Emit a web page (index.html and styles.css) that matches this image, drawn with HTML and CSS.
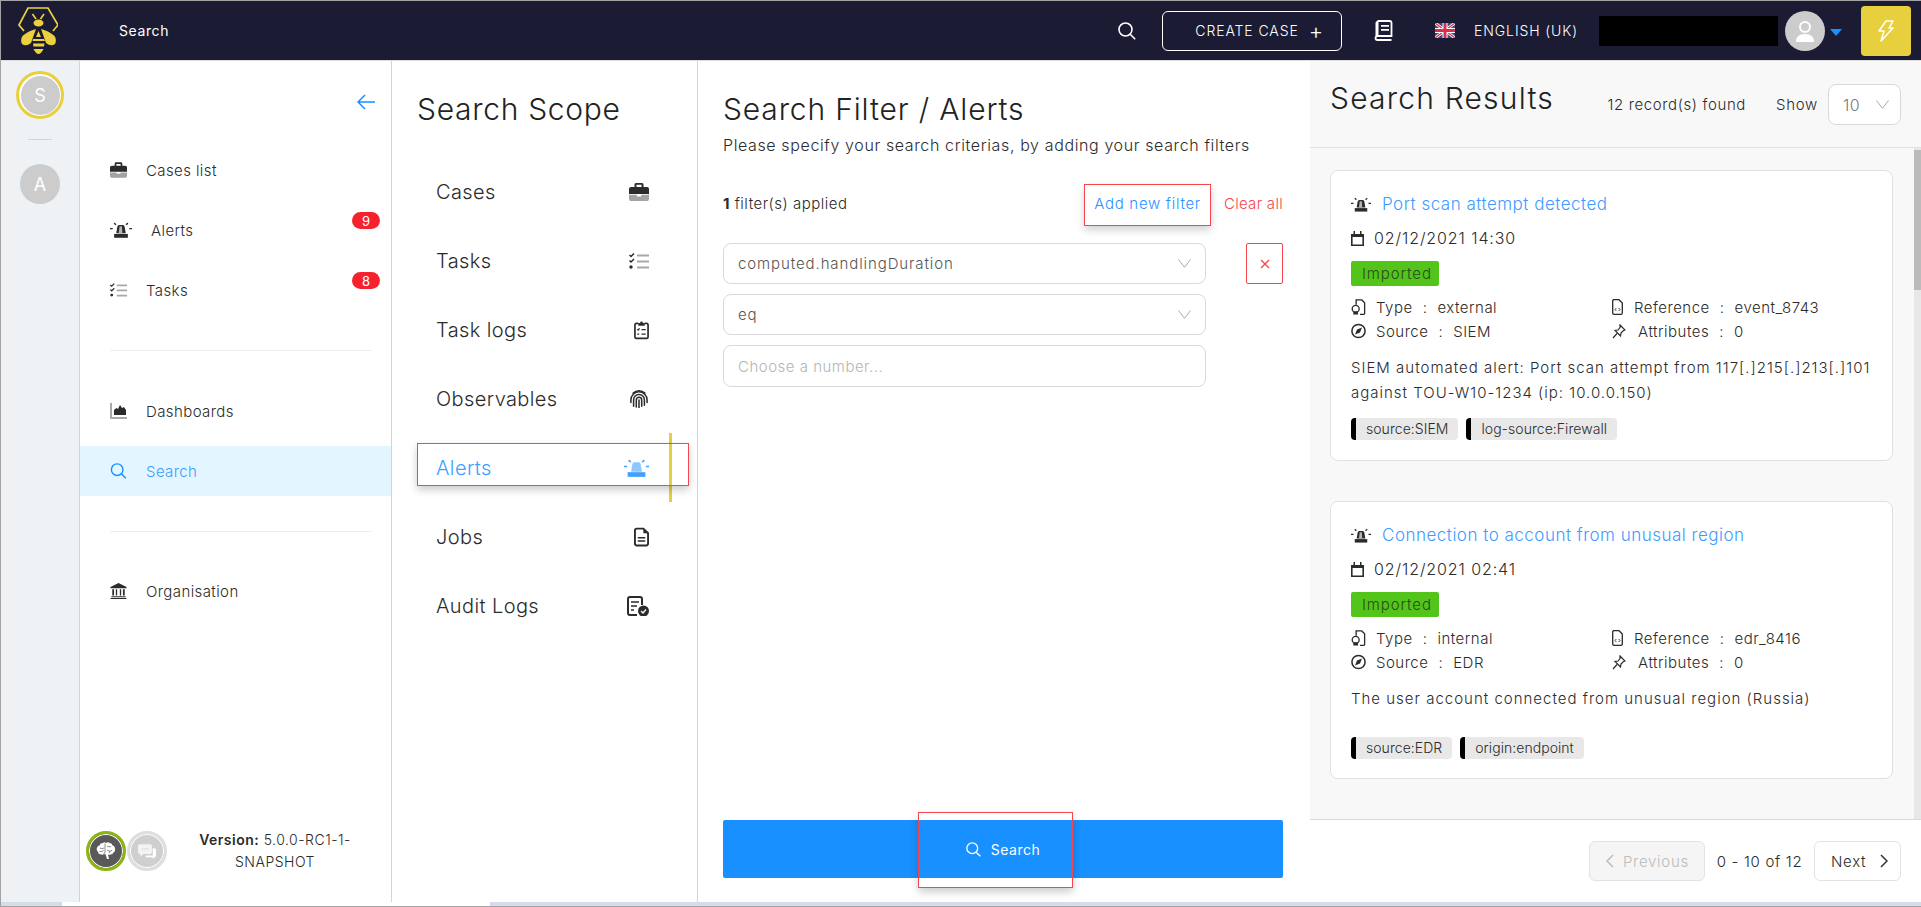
FILE: index.html
```html
<!DOCTYPE html>
<html lang="en">
<head>
<meta charset="utf-8">
<title>Search</title>
<link rel="stylesheet" href="styles.css">
</head>
<body>
<svg class="defs" width="0" height="0" aria-hidden="true">
  <symbol id="i-case" viewBox="0 0 20 18"><path fill="#2b2b2b" d="M7 0h6a1.500 1.500 0 0 1 1.500 1.500V4H18a2 2 0 0 1 2 2v5H0V6a2 2 0 0 1 2-2h3.500V1.500A1.500 1.500 0 0 1 7 0Zm.5 1.800V4h5V1.800h-5Z"/><path fill="#a3a3a3" d="M0 11.800h7.800V13.500h4.400V11.800H20V16a2 2 0 0 1-2 2H2a2 2 0 0 1-2-2Z"/></symbol>
  <symbol id="i-alert" viewBox="0 0 24 17"><path fill="#2b2b2b" d="M8 5q.3-2 2-2h4q1.700 0 2 2l1.200 7H6.800Z"/><path fill="#b5b5b5" d="M10.500 4.500h2.500l.5 7.500H9.500Z"/><path fill="#2b2b2b" d="M4.500 12.800h15V17h-15Z"/><path fill="none" stroke="#2b2b2b" stroke-width="1.500" d="M4.500 1 6.500 2.800M19.500 1l-2 1.800M0 7h3M21 7h3"/></symbol>
  <symbol id="i-alert-blue" viewBox="0 0 24 17"><path fill="#8cc8ff" d="M8 5q.3-2 2-2h4q1.700 0 2 2l1.200 7H6.800Z"/><path fill="#40a0ff" d="M3.500 12.500h17V17h-17Z"/><path fill="none" stroke="#40a0ff" stroke-width="1.500" d="M4.500 1 6.500 2.800M19.500 1l-2 1.800M0 7h3M21 7h3"/></symbol>
  <symbol id="i-tasks" viewBox="0 0 20 16"><path fill="none" stroke="#2b2b2b" stroke-width="1.500" d="M.5 2 2 3.500 5 .5M.5 7.500 2 9l3-3"/><circle cx="2" cy="14" r="1.700" fill="#2b2b2b"/><path fill="none" stroke="#a8a8a8" stroke-width="2" d="M8 2.500h12M8 8.500h12M8 14.500h12"/></symbol>
  <symbol id="i-clip" viewBox="0 0 16 20"><path fill="none" stroke="#2b2b2b" stroke-width="1.800" d="M4.500 3H2.500A1.500 1.500 0 0 0 1 4.500v13A1.500 1.500 0 0 0 2.500 19h11a1.500 1.500 0 0 0 1.500-1.500v-13A1.500 1.500 0 0 0 13.500 3h-2"/><path fill="#2b2b2b" d="M4.500 2.500h2a1.500 1.500 0 0 1 3 0h2V5.500h-7Z"/><path fill="none" stroke="#2b2b2b" stroke-width="1.300" d="M3.500 9 4.500 10 6 8.300M8 9.500h4.500M3.500 14.500h2M8 14.500h4.500"/></symbol>
  <symbol id="i-print" viewBox="0 0 20 20"><g fill="none" stroke="#2b2b2b" stroke-width="1.700" stroke-linecap="round"><path d="M1 11a9 9 0 0 1 18 0M1 14V11M19 14v-3M4 18v-7a6 6 0 0 1 12 0v6M7 19v-8a3 3 0 0 1 6 0v7M10 20v-9"/><path d="M3.500 3.500a9.500 9.500 0 0 1 13 0"/></g></symbol>
  <symbol id="i-doc" viewBox="0 0 16 20"><path fill="none" stroke="#2b2b2b" stroke-width="2" d="M3 1h7l5 5v11a2 2 0 0 1-2 2H3a2 2 0 0 1-2-2V3a2 2 0 0 1 2-2Z"/><path fill="#2b2b2b" d="M10 1l5 5h-5ZM4 10h8v1.500H4ZM4 13.500h8V15H4Z"/></symbol>
  <symbol id="i-audit" viewBox="0 0 22 20"><path fill="none" stroke="#2b2b2b" stroke-width="2" d="M15 9V3a2 2 0 0 0-2-2H3a2 2 0 0 0-2 2v14a2 2 0 0 0 2 2h7"/><path fill="none" stroke="#2b2b2b" stroke-width="1.500" d="M4 6h8M4 10h6M4 14h3"/><circle cx="16.500" cy="15" r="5.500" fill="#2b2b2b"/><path fill="none" stroke="#fff" stroke-width="1.300" d="m14 15 2 2 3-3.500"/></symbol>
  <symbol id="i-chart" viewBox="0 0 17 16"><path fill="#a8a8a8" d="M0 0h2v14h15v2H1.500A1.500 1.500 0 0 1 0 14.500Z"/><path fill="#2b2b2b" d="M4 12V7l2.500-2 1.500 1L10 2l2 3 2-1 2 3v5Z"/></symbol>
  <symbol id="i-search" viewBox="0 0 18 18"><g fill="none" stroke="currentColor" stroke-width="1.600"><circle cx="7.500" cy="7.500" r="6.500"/><path d="m12.200 12.200 5 5"/></g></symbol>
  <symbol id="i-bank" viewBox="0 0 18 18"><path fill="#2b2b2b" d="M9 0l9 4.500V6H0V4.500ZM2 7h2v7H2ZM6 7h1.500v7H6ZM10.500 7H12v7h-1.500ZM14 7h2v7h-2ZM1 15h16v1H1ZM0 16.800h18V18H0Z"/></symbol>
  <symbol id="i-cal" viewBox="0 0 13 15"><path fill="none" stroke="#2b2b2b" stroke-width="1.600" d="M.8 3.800h11.400v10.400H.8Z"/><path fill="#2b2b2b" d="M0 3h13v3H0ZM2.500 0h1.500v3H2.500ZM9 0h1.500v3H9Z"/></symbol>
  <symbol id="i-type" viewBox="0 0 15 17"><path fill="none" stroke="#2b2b2b" stroke-width="1.400" d="M5 6V1h6l3 3v11.500a.8.800 0 0 1-.8.800H9"/><circle cx="4.500" cy="10.500" r="3.700" fill="none" stroke="#2b2b2b" stroke-width="1.400"/><path fill="#2b2b2b" d="M2 13h5v3.500H2Z"/></symbol>
  <symbol id="i-file" viewBox="0 0 11 16"><path fill="none" stroke="#2b2b2b" stroke-width="1.300" d="M1.500.7h5.500l3.300 3.300v10a1.300 1.300 0 0 1-1.300 1.300H2A1.300 1.300 0 0 1 .7 14V1.500Z"/><path fill="none" stroke="#2b2b2b" stroke-width=".9" d="M4.300 9 3 10.500 4.300 12M6.700 9 8 10.500 6.700 12"/></symbol>
  <symbol id="i-compass" viewBox="0 0 15 15"><circle cx="7.500" cy="7.500" r="6.600" fill="none" stroke="#2b2b2b" stroke-width="1.500"/><path fill="#2b2b2b" d="M11 4 9 9 4 11l2-5Z"/></symbol>
  <symbol id="i-pin" viewBox="0 0 14 15"><path fill="none" stroke="#2b2b2b" stroke-width="1.200" d="M8 1l5 5-1.500.5-2.500 2.500-.5 3L3 6.500l3-.5L8 3.500ZM5 9.500 1 14"/></symbol>
  <symbol id="i-chev" viewBox="0 0 13 9"><path fill="none" stroke="currentColor" stroke-width="1" d="M.5.500 6.500 8.300 12.500.500"/></symbol>
</svg>

<div class="frame">
  <header class="topbar">
    <svg class="logo" viewBox="0 0 40 48" aria-label="TheHive logo">
      <path fill="none" stroke="#ecd13e" stroke-width="1.700" d="M6 24 1 18 10 1h20l10 17-5 6"/>
      <path fill="none" stroke="#ecd13e" stroke-width="1.700" d="M14.500 7l3.500 5M26 7l-3.500 5"/>
      <ellipse cx="20.500" cy="16" rx="5" ry="3.500" fill="#ecd13e"/>
      <path fill="#ecd13e" d="M18 22 13 36Q8 40 4 37 2 33 4.500 29 10 24 18 22ZM23 22l5 14q5 4 9 1 2-4-.5-8Q31 24 23 22Z"/>
      <path fill="#ecd13e" d="M20.500 24l2.500 6h-5ZM15 32h11l1 2H14.500ZM15 36.500h11.500l-.5 3H15.500ZM15.500 42h10Q23 47 20.500 47T15.500 42Z"/>
    </svg>
    <span class="crumb">Search</span>
    <svg class="top-search"><use href="#i-search"/></svg>
    <button class="create">CREATE CASE <span class="plus">+</span></button>
    <svg class="book" viewBox="0 0 19 21"><path fill="none" stroke="#fff" stroke-width="1.800" d="M3.500 1h12a2 2 0 0 1 2 2v13H3.500a2 2 0 0 0 0 4h14"/><path fill="#fff" d="M1.500 3a2 2 0 0 1 2-2h1v15h-1a3 3 0 0 0-2 .8ZM7 5h8v1.800H7ZM7 9h8v1.800H7Z"/></svg>
    <svg class="flag" viewBox="0 0 20 15"><rect width="20" height="15" fill="#3a4a8c"/><path stroke="#fff" stroke-width="3" d="M0 0l20 15M20 0 0 15"/><path stroke="#d8304a" stroke-width="1.300" d="M0 0l20 15M20 0 0 15"/><path stroke="#fff" stroke-width="5" d="M10 0v15M0 7.500h20"/><path stroke="#d8304a" stroke-width="3" d="M10 0v15M0 7.500h20"/></svg>
    <span class="lang">ENGLISH (UK)</span>
    <span class="redacted"></span>
    <span class="user">
      <svg viewBox="0 0 40 40"><circle cx="20" cy="20" r="20" fill="#ccc"/><circle cx="20" cy="16" r="5" fill="none" stroke="#fff" stroke-width="2"/><path fill="#fff" d="M11 31q0-8 9-8t9 8Z"/></svg>
    </span>
    <span class="caret"></span>
    <button class="bolt"><svg viewBox="0 0 16 22"><path fill="none" stroke="#fff" stroke-width="1.500" stroke-linejoin="round" d="M8 1h7l-4 7h4L3 21l3-10H1Z"/></svg></button>
  </header>

  <div class="main">
    <aside class="rail">
      <span class="org org-current"><span class="org-inner">S</span></span>
      <span class="rail-sep"></span>
      <span class="org"><span class="org-inner">A</span></span>
    </aside>

    <nav class="nav">
      <div class="nav-back"><svg viewBox="0 0 18 16"><path fill="none" stroke="#1890ff" stroke-width="1.500" d="M18 8H1M8 1 1 8l7 7"/></svg></div>
      <a class="nav-item"><svg class="nav-ic"><use href="#i-case"/></svg>Cases list</a>
      <a class="nav-item"><svg class="nav-ic nav-ic-wide"><use href="#i-alert"/></svg>Alerts<span class="badge">9</span></a>
      <a class="nav-item"><svg class="nav-ic"><use href="#i-tasks"/></svg>Tasks<span class="badge">8</span></a>
      <hr class="nav-sep">
      <a class="nav-item nav-group"><svg class="nav-ic"><use href="#i-chart"/></svg>Dashboards</a>
      <a class="nav-item nav-active"><svg class="nav-ic"><use href="#i-search"/></svg>Search</a>
      <hr class="nav-sep">
      <a class="nav-item nav-group-b"><svg class="nav-ic"><use href="#i-bank"/></svg>Organisation</a>
      <div class="nav-foot">
        <span class="round round-brain">
          <svg viewBox="0 0 20 18"><path fill="#fff" d="M4 3q0-2 3-2 1-1.500 3 0 2-1.500 3.500 0 2.500 0 2.700 2 2.800 1 2.800 4 .5 2.500-1.500 3.500-1 2.500-3.500 2-1 .5-2 0l1 4.500h-2l-1.500-5Q7 13 5.500 12.500 2.500 12.500 2 10 0 8 1 5.500 2 3.500 4 3Z"/><path fill="none" stroke="#595959" stroke-width=".7" d="M4 6q2 1.500 4 0M9 1.500V10M11 4q2 1.500 4 .5M3.500 9.500q2 .5 4-1M11 8q2 2 5 .5M7 12.500q1.500-.5 2-2.500M13 11q1-1 1-2"/></svg>
        </span>
        <span class="round round-chat">
          <svg viewBox="0 0 22 18"><path fill="#fff" opacity=".75" d="M2 0h13a2 2 0 0 1 2 2v8a2 2 0 0 1-2 2H7l-4 3v-3H2a2 2 0 0 1-2-2V2a2 2 0 0 1 2-2Z"/><path fill="#fff" d="M18 5h2a2 2 0 0 1 2 2v7a2 2 0 0 1-2 2v2l-3-2H9l1-2h8Z"/><path fill="#d0d0d0" d="M5 5h1.500v1.500H5ZM8 5h1.500v1.500H8ZM11 5h1.500v1.500H11Z"/></svg>
        </span>
        <div class="version"><b>Version:</b> 5.0.0-RC1-1-<br>SNAPSHOT</div>
      </div>
    </nav>

    <section class="scope">
      <h2 class="pane-title">Search Scope</h2>
      <ul class="scope-list">
        <li class="scope-item">Cases<svg class="scope-ic"><use href="#i-case"/></svg></li>
        <li class="scope-item">Tasks<svg class="scope-ic"><use href="#i-tasks"/></svg></li>
        <li class="scope-item">Task logs<svg class="scope-ic scope-ic-n"><use href="#i-clip"/></svg></li>
        <li class="scope-item">Observables<svg class="scope-ic"><use href="#i-print"/></svg></li>
        <li class="scope-item scope-on">Alerts<svg class="scope-ic scope-ic-w"><use href="#i-alert-blue"/></svg><span class="mark mark-alerts"></span></li>
        <li class="scope-item">Jobs<svg class="scope-ic scope-ic-n"><use href="#i-doc"/></svg></li>
        <li class="scope-item">Audit Logs<svg class="scope-ic scope-ic-a"><use href="#i-audit"/></svg></li>
      </ul>
    </section>

    <section class="filter">
      <h2 class="pane-title">Search Filter / Alerts</h2>
      <p class="filter-sub">Please specify your search criterias, by adding your search filters</p>
      <div class="filter-bar">
        <span class="filter-count"><b>1</b> filter(s) applied</span>
        <a class="add-filter">Add new filter</a>
        <a class="clear-all">Clear all</a>
      </div>
      <div class="filter-row">
        <div class="fields">
          <div class="field">computed.handlingDuration<svg class="chev"><use href="#i-chev"/></svg></div>
          <div class="field">eq<svg class="chev"><use href="#i-chev"/></svg></div>
          <div class="field field-input">Choose a number...</div>
        </div>
        <button class="remove"><svg viewBox="0 0 10 10"><path stroke="#f5454f" stroke-width="1.300" d="M1 1l8 8M9 1 1 9"/></svg></button>
      </div>
      <button class="search-btn"><svg class="btn-ic"><use href="#i-search"/></svg>Search<span class="mark mark-search"></span></button>
    </section>

    <section class="results">
      <div class="results-head">
        <h2 class="pane-title">Search Results</h2>
        <span class="found">12 record(s) found</span>
        <span class="show">Show</span>
        <span class="page-size">10<svg class="chev-s"><use href="#i-chev"/></svg></span>
      </div>
      <div class="results-list">
        <article class="card">
          <h3 class="card-title"><svg class="title-ic"><use href="#i-alert"/></svg>Port scan attempt detected</h3>
          <div class="card-date"><svg class="cal"><use href="#i-cal"/></svg>02/12/2021 14:30</div>
          <span class="status">Imported</span>
          <div class="meta">
            <div class="meta-cell"><svg class="mi"><use href="#i-type"/></svg>Type<i>:</i>external</div>
            <div class="meta-cell"><svg class="mi mi-f"><use href="#i-file"/></svg>Reference<i>:</i>event_8743</div>
            <div class="meta-cell"><svg class="mi"><use href="#i-compass"/></svg>Source<i>:</i>SIEM</div>
            <div class="meta-cell"><svg class="mi mi-p"><use href="#i-pin"/></svg>Attributes<i>:</i>0</div>
          </div>
          <p class="card-desc">SIEM automated alert: Port scan attempt from 117[.]215[.]213[.]101 against TOU-W10-1234 (ip: 10.0.0.150)</p>
          <div class="tags"><span class="tag">source:SIEM</span><span class="tag">log-source:Firewall</span></div>
        </article>
        <article class="card card-b">
          <h3 class="card-title"><svg class="title-ic"><use href="#i-alert"/></svg>Connection to account from unusual region</h3>
          <div class="card-date"><svg class="cal"><use href="#i-cal"/></svg>02/12/2021 02:41</div>
          <span class="status">Imported</span>
          <div class="meta">
            <div class="meta-cell"><svg class="mi"><use href="#i-type"/></svg>Type<i>:</i>internal</div>
            <div class="meta-cell"><svg class="mi mi-f"><use href="#i-file"/></svg>Reference<i>:</i>edr_8416</div>
            <div class="meta-cell"><svg class="mi"><use href="#i-compass"/></svg>Source<i>:</i>EDR</div>
            <div class="meta-cell"><svg class="mi mi-p"><use href="#i-pin"/></svg>Attributes<i>:</i>0</div>
          </div>
          <p class="card-desc card-desc-b">The user account connected from unusual region (Russia)</p>
          <div class="tags"><span class="tag">source:EDR</span><span class="tag">origin:endpoint</span></div>
        </article>
        <span class="vscroll"><span class="vthumb"></span></span>
      </div>
      <div class="pager">
        <button class="pg pg-prev"><svg class="pg-ic" viewBox="0 0 8 14"><path fill="none" stroke="#bbb" stroke-width="1.500" d="M7 1 1 7l6 6"/></svg>Previous</button>
        <span class="pg-info">0 - 10 of 12</span>
        <button class="pg pg-next">Next<svg class="pg-ic" viewBox="0 0 8 14"><path fill="none" stroke="#333" stroke-width="1.500" d="m1 1 6 6-6 6"/></svg></button>
      </div>
    </section>
  </div>
  <div class="hscroll"><span class="hthumb"></span></div>
</div>
</body>
</html>
```
FILE: styles.css
```css
* { box-sizing: border-box; }
html, body { margin: 0; height: 100%; }
body { width: 1921px; height: 907px; overflow: hidden; background: #fff; color: #2b2b2b; font-family: Inter, "Open Sans", sans-serif; font-size: 14px; font-weight: 300; letter-spacing: .5px; }
.defs { position: absolute; }
svg { display: block; flex: none; }
button { font: inherit; letter-spacing: inherit; }
h2, h3, p, ul { margin: 0; padding: 0; list-style: none; font-weight: 300; }

.frame { display: flex; flex-direction: column; height: 907px; border-top: 1px solid #a3a3a3; border-left: 1px solid #a3a3a3; border-bottom: 1px solid #a3a3a3; }

/* top bar */
.topbar { display: flex; align-items: center; height: 60px; flex: none; background: #1b1c34; color: #fff; border-bottom: 1px solid #ddd; padding-right: 10px; }
.logo { width: 40px; height: 48px; margin-left: 17px; }
.crumb { margin-left: 61px; font-size: 14px; font-weight: 400; letter-spacing: .6px; }
.top-search { width: 18px; height: 18px; color: #fff; margin-left: auto; }
.create { width: 180px; height: 40px; margin-left: 26px; border: 1px solid #fff; border-radius: 6px; background: transparent; color: #fff; font-size: 14px; font-weight: 300; letter-spacing: .9px; display: flex; align-items: center; justify-content: flex-end; padding: 0 18px 0 0; gap: 10px; }
.plus { font-size: 22px; line-height: 20px; letter-spacing: 0; }
.book { width: 19px; height: 21px; margin-left: 32px; }
.flag { width: 20px; height: 15px; margin-left: 42px; }
.lang { margin-left: 19px; font-size: 14px; letter-spacing: .9px; width: 125px; white-space: nowrap; }
.redacted { width: 179px; height: 30px; background: #000; }
.user { width: 40px; height: 40px; margin-left: 7px; }
.caret { width: 0; height: 0; margin-left: 5px; margin-top: 3px; border-left: 6px solid transparent; border-right: 6px solid transparent; border-top: 7px solid #1890ff; }
.bolt { width: 50px; height: 50px; margin-left: 19px; border: 0; border-radius: 4px; background: #e8cf3d; display: flex; align-items: center; justify-content: center; padding: 0; }
.bolt svg { width: 16px; height: 22px; }

.main { display: flex; flex: 1; min-height: 0; }

/* org rail */
.rail { width: 79px; flex: none; background: #eef2f5; border-right: 1px solid #d4d4d4; display: flex; flex-direction: column; align-items: center; padding-top: 10px; }
.org { width: 48px; height: 48px; display: flex; align-items: center; justify-content: center; }
.org-current { border: 3px solid #e8cf3d; border-radius: 50%; background: #fff; }
.org-inner { width: 40px; height: 40px; border-radius: 50%; background: #ccc; color: #fff; font-size: 18px; font-weight: 400; letter-spacing: 0; display: flex; align-items: center; justify-content: center; }
.org-current .org-inner { width: 39px; height: 39px; }
.rail-sep { width: 24px; height: 1px; background: #d4d4d4; margin: 20px 0 20px; }

/* nav */
.nav { width: 312px; flex: none; display: flex; flex-direction: column; border-right: 1px solid #d4d4d4; position: relative; }
.nav-back { height: 84px; padding: 33px 16px 0 0; display: flex; justify-content: flex-end; align-items: flex-start; }
.nav-back svg { width: 18px; height: 16px; }
.nav-item { display: flex; align-items: center; height: 50px; margin-top: 10px; padding-left: 30px; font-size: 15px; letter-spacing: .4px; font-weight: 300; position: relative; }
.nav-item:first-of-type { margin-top: 0; }
.nav-ic { width: 17px; height: 16px; margin-right: 19px; }
.nav-ic-wide { width: 22px; height: 16px; margin-right: 19px; }
.nav-active { background: #e3f5fe; color: #3d9bff; }
.nav-active .nav-ic { color: #1890ff; }
.badge { position: absolute; left: 272px; top: 7px; width: 28px; height: 17px; border-radius: 9px; background: #f5222d; color: #fff; font-size: 13px; font-weight: 400; letter-spacing: 0; display: flex; align-items: center; justify-content: center; }
.nav-sep { width: 262px; height: 1px; border: 0; background: #eee; margin: 35px 0 0 30px; }
.nav-group { margin-top: 35px; }
.nav-group-b { margin-top: 34px; }
.nav-foot { margin-top: auto; display: flex; align-items: center; padding: 0 0 29px 6px; }
.round { width: 40px; height: 40px; border-radius: 50%; display: flex; align-items: center; justify-content: center; flex: none; }
.round-brain { background: #595959; border: 3px solid #8cb412; box-shadow: inset 0 0 0 1px #fff; }
.round-brain svg { width: 20px; height: 18px; }
.round-chat { background: #cfcfcf; border: 3px solid #dedede; box-shadow: inset 0 0 0 1px #fff; margin-left: 1px; }
.round-chat svg { width: 18px; height: 15px; }
.version { width: 160px; margin-left: 28px; text-align: center; font-size: 14px; line-height: 22px; font-weight: 300; white-space: nowrap; }
.version b { font-weight: 600; }

/* scope */
.pane-title { font-size: 30px; line-height: 40px; font-weight: 300; color: #222; white-space: nowrap; letter-spacing: .85px; }
.scope { width: 306px; flex: none; border-right: 1px solid #d4d4d4; padding-top: 28px; }
.scope .pane-title { padding-left: 25px; letter-spacing: .7px; }
.scope-list { margin-top: 28px; width: 280px; }
.scope-item { display: flex; align-items: center; justify-content: space-between; height: 69px; padding: 0 23px 0 44px; font-size: 20px; letter-spacing: .4px; position: relative; }
.scope-ic { width: 20px; height: 18px; }
.scope-ic-n { width: 15px; height: 20px; }
.scope-ic-a { width: 22px; height: 20px; }
.scope-ic-w { width: 25px; height: 18px; }
.scope-on { color: #40a0ff; border-right: 3px solid #e8cf3d; padding-right: 20px; }
.mark { position: absolute; border: 1px solid #f5454f; box-shadow: 0 4px 8px rgba(0,0,0,.2); pointer-events: none; }
.mark-alerts { left: 25px; top: 10px; width: 272px; height: 43px; }

/* filter */
.filter { width: 612px; flex: none; display: flex; flex-direction: column; padding: 28px 27px 24px 25px; }
.filter-sub { margin-top: 5px; font-size: 16px; line-height: 22px; letter-spacing: .62px; white-space: nowrap; }
.filter-bar { display: flex; align-items: center; height: 42px; margin-top: 28px; font-size: 15px; }
.filter-count { flex: 1; padding-bottom: 3px; }
.filter-count b { font-weight: 700; }
.add-filter { height: 42px; padding: 0 9px 3px; display: flex; align-items: center; color: #2a8fff; letter-spacing: .7px; border: 1px solid #f5454f; box-shadow: 0 4px 8px rgba(0,0,0,.18); }
.clear-all { margin-left: 13px; padding-bottom: 3px; color: #f5454f; letter-spacing: .3px; }
.filter-row { display: flex; align-items: flex-start; margin-top: 17px; }
.fields { width: 483px; display: flex; flex-direction: column; gap: 10px; }
.field { height: 41px; border: 1px solid #d9d9d9; border-radius: 8px; padding: 0 14px; display: flex; align-items: center; justify-content: space-between; color: #555; font-size: 15px; letter-spacing: .9px; }
.field-input { height: 42px; color: #b5b5b5; letter-spacing: .5px; }
.chev { width: 13px; height: 9px; color: #aaa; }
.remove { width: 37px; height: 41px; margin-left: 40px; border: 1px solid #f5454f; border-radius: 2px; background: #fff; display: flex; align-items: center; justify-content: center; padding: 0; }
.remove svg { width: 10px; height: 10px; }
.search-btn { margin-top: auto; height: 58px; border: 0; border-radius: 2px; background: #1890ff; color: #fff; font-size: 14px; font-weight: 400; display: flex; align-items: center; justify-content: center; gap: 10px; position: relative; padding: 0; }
.btn-ic { width: 15px; height: 15px; color: #fff; }
.mark-search { left: 195px; top: -8px; width: 155px; height: 76px; }

/* results */
.results { flex: 1; min-width: 0; display: flex; flex-direction: column; }
.results-head { height: 87px; flex: none; display: flex; align-items: flex-start; background: #f8f8f8; border-bottom: 1px solid #e0e0e0; padding: 17px 20px 0 20px; font-size: 15px; }
.results-head .pane-title { flex: 1; letter-spacing: 1.2px; }
.found { margin-top: 17px; letter-spacing: .62px; }
.show { margin-left: 30px; margin-top: 17px; letter-spacing: .7px; }
.page-size { width: 73px; height: 41px; margin-left: 10px; margin-top: 6px; border: 1px solid #d9d9d9; border-radius: 8px; background: #fff; display: flex; align-items: center; justify-content: space-between; padding: 0 11px 0 14px; color: #777; font-size: 16px; }
.chev-s { width: 13px; height: 9px; color: #aaa; }
.results-list { flex: 1; min-height: 0; background: #f8f8f8; padding: 22px 0 0 20px; position: relative; overflow: hidden; }
.vscroll { position: absolute; right: 0; top: 0; bottom: 0; width: 7px; background: #e8e8e8; padding-top: 2px; }
.vthumb { display: block; height: 140px; background: #bbb; }
.card { width: 563px; height: 291px; background: #fff; border: 1px solid #e0e0e0; border-radius: 8px; padding: 20px 20px 0 20px; }
.card-b { height: 278px; margin-top: 40px; }
.card-title { display: flex; align-items: center; height: 26px; color: #3d9bff; font-size: 17px; letter-spacing: .5px; font-weight: 300; }
.title-ic { width: 20px; height: 15px; margin-right: 11px; }
.card-date { display: flex; align-items: center; height: 20px; margin-top: 11px; font-size: 16px; letter-spacing: .9px; }
.cal { width: 13px; height: 15px; margin-right: 10px; }
.status { display: block; width: 88px; height: 25px; margin-top: 13px; border-radius: 2px; background: #52c41a; color: #2b4a1d; font-size: 15px; letter-spacing: .9px; line-height: 25px; padding-left: 11px; }
.meta { display: grid; grid-template-columns: 261px 1fr; grid-auto-rows: 24px; margin-top: 9px; }
.meta-cell { display: flex; align-items: center; font-size: 15px; letter-spacing: .5px; }
.meta-cell i { font-style: normal; margin: 0 10px; }
.mi { width: 15px; height: 16px; margin-right: 10px; }
.mi-f { width: 11px; height: 16px; margin-right: 11px; }
.mi-p { width: 14px; height: 15px; margin-right: 12px; }
.card-desc { margin-top: 12px; font-size: 15px; letter-spacing: 1px; line-height: 25px; min-height: 50px; }
.card-desc-b { min-height: 38px; }
.tags { display: flex; gap: 8px; margin-top: 13px; }
.tag { height: 22px; background: #e8e8e8; border-left: 5px solid #000; border-radius: 4px; padding: 0 10px; font-size: 14px; letter-spacing: .05px; line-height: 22px; }

.pager { height: 83px; flex: none; border-top: 1px solid #d9d9d9; display: flex; align-items: center; justify-content: flex-end; padding: 0 20px 0 0; gap: 9px; font-size: 15px; letter-spacing: .7px; }
.pg { height: 40px; border: 1px solid #e3e3e3; border-radius: 6px; background: #fff; display: flex; align-items: center; font-size: 15px; font-weight: 300; gap: 9px; color: #2b2b2b; }
.pg-prev { width: 116px; padding: 0 0 0 16px; background: #f5f5f5; color: #bbb; }
.pg-next { width: 87px; padding: 0 12px 0 16px; justify-content: space-between; }
.pg-ic { width: 8px; height: 14px; }
.pg-info { width: 91px; text-align: center; white-space: nowrap; }

.hscroll { height: 4px; flex: none; background: #d4dcea; padding-left: 61px; }
.hthumb { display: block; width: 428px; height: 4px; background: #fff; }
```
